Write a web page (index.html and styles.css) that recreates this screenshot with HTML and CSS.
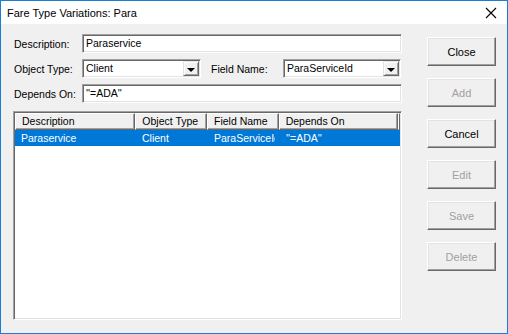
FILE: index.html
```html
<html>
    <head>
        <meta charset="utf-8">
        <title>Fare Type Variations: Para</title>
        <link rel="stylesheet" href="styles.css">
    </head>
    <body>
        <div class="window">
            <div class="titlebar">
                <span class="title">Fare Type Variations: Para</span>
                <svg class="closex" width="12" height="12" viewBox="0 0 12 12">
                    <path d="M1 1 L11 11 M11 1 L1 11" stroke="#000" stroke-width="1.1" fill="none"/>
                </svg>
            </div>
            <div class="client">
                <div class="left">
                    <div class="row">
                        <span class="label">Description:</span>
                        <div class="field wide">Paraservice</div>
                    </div>
                    <div class="row">
                        <span class="label">Object Type:</span>
                        <div class="field combo one">
                            <span class="value">Client</span>
                            <span class="arrow"></span>
                        </div>
                        <span class="label2">Field Name:</span>
                        <div class="field combo two">
                            <span class="value">ParaServiceId</span>
                            <span class="arrow"></span>
                        </div>
                    </div>
                    <div class="row third">
                        <span class="label">Depends On:</span>
                        <div class="field wide">''=ADA''</div>
                    </div>

                    <div class="list">
                        <div class="head">
                            <div class="hcell c1">Description</div>
                            <div class="hcell c2">Object Type</div>
                            <div class="hcell c3">Field Name</div>
                            <div class="hcell c4">Depends On</div>
                            <div class="hcell c5"></div>
                        </div>
                        <div class="item selected">
                            <div class="cell c1">Paraservice</div>
                            <div class="cell c2">Client</div>
                            <div class="cell c3"><span class="clip">ParaServiceId</span></div>
                            <div class="cell c4">''=ADA''</div>
                        </div>
                    </div>
                </div>
                <div class="right">
                    <div class="btn">Close</div>
                    <div class="btn off">Add</div>
                    <div class="btn">Cancel</div>
                    <div class="btn off">Edit</div>
                    <div class="btn off">Save</div>
                    <div class="btn off">Delete</div>
                </div>
            </div>
        </div>
    </body>
</html>
```
FILE: styles.css
```css
body{
    margin:0;
    font-family:"Liberation Sans", Arial, sans-serif;
    font-size:10.5px;
    color:#000;
}

.window{
    width:508px;
    height:334px;
    box-sizing:border-box;
    border:1px solid #1a7fd4;
    display:flex;
    flex-direction:column;
    background:#f0f0f0;
}
.titlebar{
    height:23px;
    background:#fff;
    display:flex;
    align-items:center;
    padding-left:6px;
    padding-right:10px;
}
.title{
    font-size:11px;
    flex:1;
}
.closex{
    display:block;
}

.client{
    flex:1;
    display:flex;
}
.left{
    width:389px;
    padding:10px 0 0 12px;
}
.row{
    display:flex;
    align-items:center;
    height:19px;
    margin-bottom:6px;
}
.row.third{
    margin-top:1px;
    margin-bottom:8px;
}
.label{
    width:69px;
    padding-left:1px;
    box-sizing:border-box;
}
.label2{
    width:72px;
    padding-left:10px;
}

.field{
    height:19px;
    box-sizing:border-box;
    background:#fff;
    border:1px solid;
    border-color:#a0a0a0 #fff #fff #a0a0a0;
    box-shadow:inset 1px 1px 0 #696969, inset -1px -1px 0 #e3e3e3;
    padding:2px 0 0 3px;
    white-space:nowrap;
    overflow:hidden;
}
.wide{
    flex:1;
}
.combo{
    display:flex;
    padding:0;
    align-items:stretch;
}
.combo.one{
    width:119px;
}
.combo.two{
    width:118px;
}
.value{
    flex:1;
    padding:2px 0 0 3px;
}
.arrow{
    width:16px;
    margin:1px 1px 1px 0;
    box-sizing:border-box;
    background:#f0f0f0;
    border:1px solid;
    border-color:#e3e3e3 #696969 #696969 #e3e3e3;
    box-shadow:inset 1px 1px 0 #fff, inset -1px -1px 0 #a0a0a0;
    position:relative;
}
.arrow:after{
    content:"";
    position:absolute;
    left:3px;
    top:6px;
    border-left:4px solid transparent;
    border-right:4px solid transparent;
    border-top:4px solid #000;
}

.list{
    height:209px;
    box-sizing:border-box;
    background:#fff;
    border:1px solid;
    border-color:#a0a0a0 #fff #fff #a0a0a0;
    box-shadow:inset 1px 1px 0 #696969, inset -1px -1px 0 #e3e3e3;
    padding:1px 1px 0 1px;
}
.head{
    display:flex;
    height:17px;
}
.hcell{
    box-sizing:border-box;
    background:#f0f0f0;
    border:1px solid;
    border-color:#fff #696969 #696969 #fff;
    box-shadow:inset -1px -1px 0 #a0a0a0;
    padding:1px 0 0 6px;
    white-space:nowrap;
    overflow:hidden;
}
.item{
    display:flex;
    height:16px;
    align-items:center;
}
.cell{
    box-sizing:border-box;
    padding-left:6px;
    white-space:nowrap;
    overflow:hidden;
}
.c1{ width:121px; }
.c2{ width:72px; }
.c3{ width:72px; }
.c4{ width:120px; }
.c5{ flex:1; padding:0; }
.selected{
    background:#0078d7;
    color:#fff;
    width:385px;
}
.clip{
    display:block;
    width:61px;
    overflow:hidden;
}

.right{
    padding:13px 0 0 25px;
    display:flex;
    flex-direction:column;
    gap:12px;
}
.btn{
    width:69px;
    height:29px;
    box-sizing:border-box;
    background:#f0f0f0;
    border:1px solid;
    border-color:#fff #696969 #696969 #fff;
    box-shadow:inset -1px -1px 0 #a0a0a0, inset 1px 1px 0 #e3e3e3;
    display:flex;
    align-items:center;
    justify-content:center;
    font-size:11px;
}
.btn.off{
    color:#a0a0a0;
}
```
